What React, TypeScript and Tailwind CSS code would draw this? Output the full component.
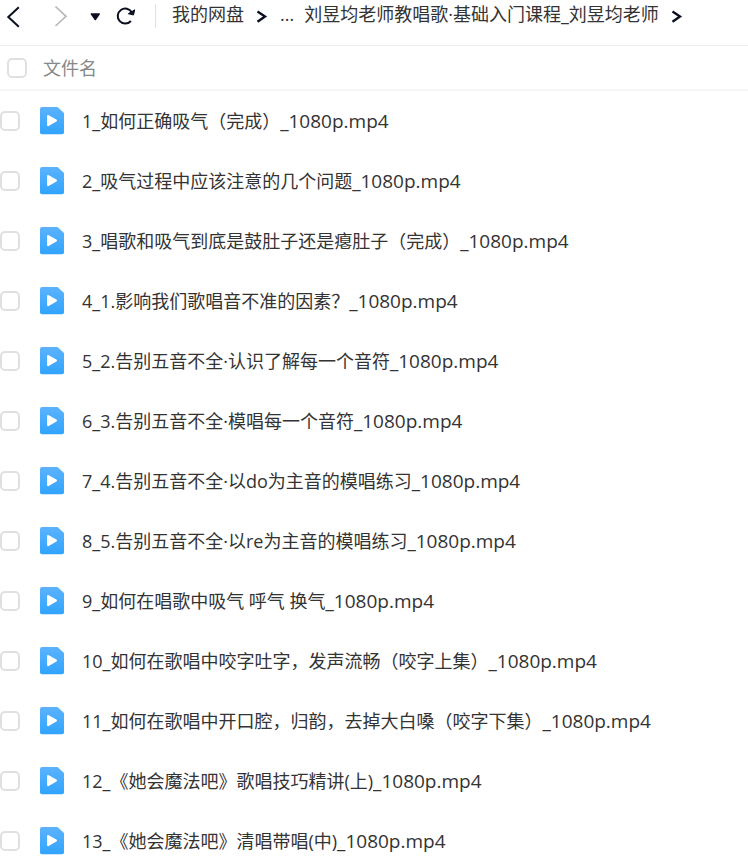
import React from 'react';

const files = [
  { title: '1_如何正确吸气（完成）', suffix: '_1080p.mp4' },
  { title: '2_吸气过程中应该注意的几个问题', suffix: '_1080p.mp4' },
  { title: '3_唱歌和吸气到底是鼓肚子还是瘪肚子（完成）', suffix: '_1080p.mp4' },
  { title: '4_1.影响我们歌唱音不准的因素？', suffix: '_1080p.mp4' },
  { title: '5_2.告别五音不全·认识了解每一个音符', suffix: '_1080p.mp4' },
  { title: '6_3.告别五音不全·模唱每一个音符', suffix: '_1080p.mp4' },
  { title: '7_4.告别五音不全·以do为主音的模唱练习', suffix: '_1080p.mp4' },
  { title: '8_5.告别五音不全·以re为主音的模唱练习', suffix: '_1080p.mp4' },
  { title: '9_如何在唱歌中吸气 呼气 换气', suffix: '_1080p.mp4' },
  { title: '10_如何在歌唱中咬字吐字，发声流畅（咬字上集）', suffix: '_1080p.mp4' },
  { title: '11_如何在歌唱中开口腔，归韵，去掉大白嗓（咬字下集）', suffix: '_1080p.mp4' },
  { title: '12_《她会魔法吧》歌唱技巧精讲(上)', suffix: '_1080p.mp4' },
  { title: '13_《她会魔法吧》清唱带唱(中)', suffix: '_1080p.mp4' },
];

const Separator = () => (
  <svg className="h-4 w-3 shrink-0" viewBox="0 0 12 16" fill="none" stroke="#0b1020" strokeWidth="2.4">
    <path d="M1.500 3.500 9 8.600 1.500 13.800" />
  </svg>
);

const VideoIcon = () => (
  <svg className="h-7 w-6 shrink-0" viewBox="0 0 24 28">
    <defs>
      <linearGradient id="video" x1="0" y1="0" x2="0" y2="1">
        <stop offset="0" stopColor="#5cb2fd" />
        <stop offset="1" stopColor="#30a4fe" />
      </linearGradient>
    </defs>
    <path d="M2 0H17.500L24 6V25.300a2 2 0 0 1-2 2H2a2 2 0 0 1-2-2V2a2 2 0 0 1 2-2Z" fill="url(#video)" />
    <path d="M7 9.200c0-1 .9-1.500 1.700-1l7.700 4.400c.8.500.8 1.500 0 2l-7.700 4.400c-.8.500-1.700 0-1.700-1Z" fill="#fff" />
  </svg>
);

interface CheckProps {
  label: string;
}

const Check: React.FC<CheckProps> = ({ label }) => (
  <input
    type="checkbox"
    aria-label={label}
    className="size-5 shrink-0 appearance-none rounded-[5px] border-2 border-[#e0e0e0] bg-white checked:bg-[#30a4fe]"
  />
);

const Toolbar = () => (
  <header className="flex h-[46px] items-start border-b border-[#ededed] pt-1">
    <nav aria-label="历史" className="flex h-6 items-center">
      <button type="button" aria-label="后退" className="ml-1.5">
        <svg className="h-6 w-4" viewBox="0 0 16 24" fill="none" stroke="#0b1020" strokeWidth="2">
          <path d="M12.800 3.300 2.300 13l10.500 9.700" />
        </svg>
      </button>
      <button type="button" aria-label="前进" className="ml-8" disabled>
        <svg className="h-6 w-4" viewBox="0 0 16 24" fill="none" stroke="#b8b8b8" strokeWidth="1.700">
          <path d="M1.500 2.500 12 12.300 1.500 22" />
        </svg>
      </button>
      <button type="button" aria-label="历史记录" className="ml-5">
        <svg className="h-6 w-3" viewBox="0 0 12 24" fill="#0b1020">
          <path d="M1.400 9.300h7.800c.6 0 .9.600.6 1.100l-3.900 5.600c-.3.400-.9.400-1.200 0L.8 10.400c-.3-.5 0-1.100.6-1.100Z" />
        </svg>
      </button>
      <button type="button" aria-label="刷新" className="ml-3.5">
        <svg className="h-6 w-5" viewBox="0 0 20 24" fill="none" stroke="#0b1020" strokeWidth="2">
          <path d="M14.900 17A7.500 7.500 0 1 1 15.800 8.400" />
          <path d="M18.700 5.800 17.500 11 12.300 9.700Z" fill="#0b1020" strokeWidth="1" />
        </svg>
      </button>
    </nav>
    <div className="ml-[19px] h-6 w-px shrink-0 bg-[#e2e2e2]" />
    <nav aria-label="路径" className="ml-4 flex h-6 items-center whitespace-nowrap text-[#333]">
      <a href="#root" className="-mt-1">我的网盘</a>
      <span className="ml-3 flex"><Separator /></span>
      <a href="#more" className="-mt-1 ml-3">...</a>
      <a href="#course" className="-mt-1 ml-2.5">刘昱均老师教唱歌·基础入门课程_刘昱均老师</a>
      <span className="ml-3 flex"><Separator /></span>
    </nav>
  </header>
);

const App = () => (
  <div
    lang="zh-CN"
    className="min-h-screen overflow-x-hidden bg-white font-['Open_Sans','Noto_Sans_CJK_SC',sans-serif] text-[18px] leading-6 text-[#333]"
  >
    <Toolbar />
    <main>
      <div className="flex h-[45px] items-center border-b-2 border-[#f6f6f6] pl-[7px] text-[#888]">
        <Check label="全选" />
        <span className="ml-4">文件名</span>
      </div>
      <ul>
        {files.map(({ title, suffix }) => (
          <li key={title} className="flex h-[60px] items-center whitespace-nowrap">
            <Check label={title + suffix} />
            <span className="ml-5 flex"><VideoIcon /></span>
            <span className="ml-[18px]">
              {title}
              <span className="text-[19px]">{suffix}</span>
            </span>
          </li>
        ))}
      </ul>
    </main>
  </div>
);

export default App;
